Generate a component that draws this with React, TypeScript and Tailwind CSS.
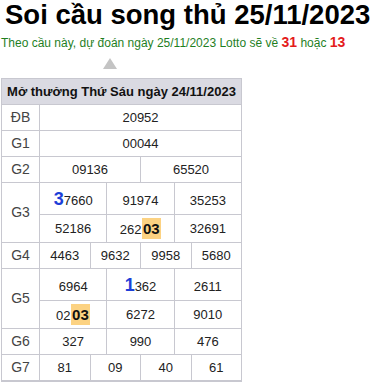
import React from "react";

const B = "border-[#c8c8d0]";

type CellProps = { children: React.ReactNode; className?: string; first?: boolean };

function Cell({ children, className = "", first }: CellProps) {
  return (
    <div
      className={`flex-1 min-w-0 text-center text-[13px] text-[#222] ${first ? "" : `border-l ${B}`} ${className}`}
    >
      {children}
    </div>
  );
}

function Big({ children }: { children: React.ReactNode }) {
  return <span className="text-[18px] leading-[12px] font-bold text-[#1d3fd8]">{children}</span>;
}

function Hl({ children }: { children: React.ReactNode }) {
  return (
    <span className="inline-block align-baseline bg-[#fcd282] px-[1.5px] text-[15px] leading-[21px] font-bold text-[#111]">
      {children}
    </span>
  );
}

function Label({ children }: { children: React.ReactNode }) {
  return (
    <div className={`w-[38px] shrink-0 border-r ${B} flex items-center justify-center text-[14px] text-[#444]`}>
      {children}
    </div>
  );
}

function SimpleRow({ label, values }: { label: string; values: string[] }) {
  return (
    <div className={`flex border-t ${B}`}>
      <Label>{label}</Label>
      <div className="flex-1 flex h-[25px]">
        {values.map((v, i) => (
          <Cell key={i} first={i === 0} className="flex items-center justify-center">
            {v}
          </Cell>
        ))}
      </div>
    </div>
  );
}

export default function App() {
  return (
    <div className="w-[375px] h-[388px] bg-white font-['Liberation_Sans',Arial,sans-serif] overflow-hidden">
      <h1 className="pl-[5px] pt-[1px] text-[27.5px] leading-[27px] font-bold text-black whitespace-nowrap">
        Soi cầu song thủ 25/11/2023
      </h1>
      <p className="mt-[6px] pl-[1px] text-[12px] leading-[16px] text-[#1f7f1f] whitespace-nowrap">
        Theo cầu này, dự đoán ngày 25/11/2023 Lotto sẽ về{" "}
        <span className="text-[14px] font-bold text-[#e41b1b]">31</span> hoặc{" "}
        <span className="text-[14px] font-bold text-[#e41b1b]">13</span>
      </p>
      <div className="ml-[103px] mt-[7px] w-0 h-0 border-l-[7px] border-r-[7px] border-b-[11px] border-l-transparent border-r-transparent border-b-[#c4c4c4]" />
      <div className={`ml-[1px] mt-[9px] w-[241px] border ${B} shadow-[0_1px_0_#c8c8d0]`}>
        <div className="h-[25px] bg-[#dadae2] flex items-center justify-center text-[13px] font-bold text-[#111] whitespace-nowrap">
          Mở thưởng Thứ Sáu ngày 24/11/2023
        </div>
        <SimpleRow label="ĐB" values={["20952"]} />
        <SimpleRow label="G1" values={["00044"]} />
        <SimpleRow label="G2" values={["09136", "65520"]} />
        <div className={`flex border-t ${B}`}>
          <Label>G3</Label>
          <div className="flex-1 flex flex-col">
            <div className="flex h-[31px] leading-[15px]">
              <Cell first className="pt-[9.5px]">
                <Big>3</Big>7660
              </Cell>
              <Cell className="pt-[9.5px]">91974</Cell>
              <Cell className="pt-[9.5px]">35253</Cell>
            </div>
            <div className={`flex h-[28px] border-t ${B} leading-[15px]`}>
              <Cell first className="pt-[6px]">52186</Cell>
              <Cell className="pt-[3px]">
                262<Hl>03</Hl>
              </Cell>
              <Cell className="pt-[6px]">32691</Cell>
            </div>
          </div>
        </div>
        <SimpleRow label="G4" values={["4463", "9632", "9958", "5680"]} />
        <div className={`flex border-t ${B}`}>
          <Label>G5</Label>
          <div className="flex-1 flex flex-col">
            <div className="flex h-[31px] leading-[15px]">
              <Cell first className="pt-[9.5px]">6964</Cell>
              <Cell className="pt-[9.5px]">
                <Big>1</Big>362
              </Cell>
              <Cell className="pt-[9.5px]">2611</Cell>
            </div>
            <div className={`flex h-[28px] border-t ${B} leading-[15px]`}>
              <Cell first className="pt-[3px]">
                02<Hl>03</Hl>
              </Cell>
              <Cell className="pt-[6px]">6272</Cell>
              <Cell className="pt-[6px]">9010</Cell>
            </div>
          </div>
        </div>
        <SimpleRow label="G6" values={["327", "990", "476"]} />
        <SimpleRow label="G7" values={["81", "09", "40", "61"]} />
      </div>
    </div>
  );
}
